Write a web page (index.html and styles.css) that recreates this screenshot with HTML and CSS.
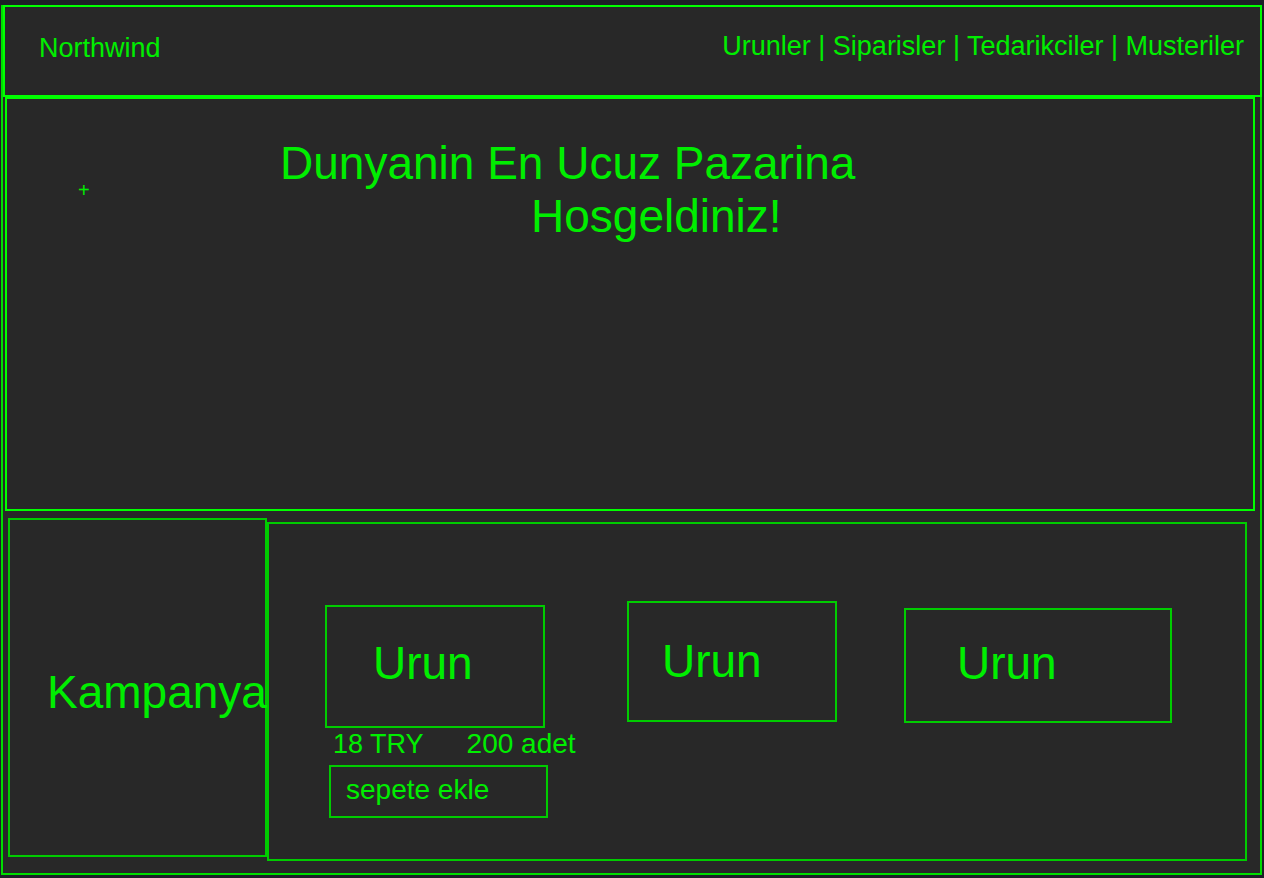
FILE: index.html
```html
<!DOCTYPE html>
<html lang="tr">
<head>
<meta charset="utf-8">
<title>Northwind</title>
<link rel="stylesheet" href="styles.css">
</head>
<body>
<div class="page">
  <header class="header">
    <div class="brand">Northwind</div>
    <nav class="nav">Urunler | Siparisler | Tedarikciler | Musteriler</nav>
  </header>
  <section class="hero">
    <span class="plus">+</span>
    <h1 class="title">
      <span class="line">Dunyanin En Ucuz Pazarina</span>
      <span class="line line-2">Hosgeldiniz!</span>
    </h1>
  </section>
  <section class="bottom">
    <aside class="campaign">Kampanya</aside>
    <div class="products">
      <div class="product product-1">
        <div class="card card-1">Urun</div>
        <div class="meta">
          <span class="price">18 TRY</span>
          <span class="stock">200 adet</span>
        </div>
        <button class="add">sepete ekle</button>
      </div>
      <div class="product product-2">
        <div class="card card-2">Urun</div>
      </div>
      <div class="product product-3">
        <div class="card card-3">Urun</div>
      </div>
    </div>
  </section>
</div>
</body>
</html>
```

FILE: styles.css
```css
* {
  box-sizing: border-box;
}

html, body {
  margin: 0;
  padding: 0;
}

body {
  background: #1d1f27;
  font-family: "Liberation Sans", Arial, sans-serif;
  color: #00ee00;
  width: 1264px;
  height: 878px;
  overflow: hidden;
}

.page {
  margin: 5px 0 0 1px;
  width: 1261px;
  height: 870px;
  border: 2px solid #00dd00;
  background: #282828;
}

.header {
  display: flex;
  justify-content: space-between;
  align-items: flex-start;
  margin: -2px -2px 0 0;
  height: 92px;
  border: 2px solid #00ff00;
  padding: 26px 16px 0 34px;
  font-size: 27px;
}

.brand {
  line-height: 31px;
}

.nav {
  margin-top: -2px;
  line-height: 31px;
  white-space: nowrap;
}

.hero {
  display: flex;
  align-items: flex-start;
  margin-left: 2px;
  width: 1250px;
  height: 414px;
  border: 2px solid #00ff00;
}

.plus {
  display: block;
  width: 12px;
  margin: 80px 0 0 71px;
  font-size: 20px;
  line-height: 23px;
}

.title {
  margin: 38px 0 0 190px;
  font-size: 46px;
  font-weight: normal;
  line-height: 53px;
}

.line {
  display: block;
  white-space: nowrap;
}

.line-2 {
  padding-left: 251px;
}

.bottom {
  display: flex;
  align-items: flex-start;
  margin-top: 7px;
  padding-left: 5px;
}

.campaign {
  width: 259px;
  height: 339px;
  border: 2px solid #00cc00;
  padding: 146px 0 0 37px;
  font-size: 46px;
  line-height: 53px;
  white-space: nowrap;
}

.products {
  display: flex;
  align-items: flex-start;
  margin-top: 4px;
  width: 980px;
  height: 339px;
  border: 2px solid #00cc00;
  padding-left: 56px;
}

.product {
  flex: none;
}

.card {
  border: 2px solid #00cc00;
  font-size: 46px;
  line-height: 53px;
}

.product-1 {
  width: 220px;
  margin-top: 81px;
}

.card-1 {
  width: 220px;
  height: 123px;
  padding: 30px 0 0 46px;
}

.product-2 {
  margin: 77px 0 0 82px;
}

.card-2 {
  width: 210px;
  height: 121px;
  padding: 32px 0 0 33px;
}

.product-3 {
  margin: 84px 0 0 67px;
}

.card-3 {
  width: 268px;
  height: 115px;
  padding: 27px 0 0 51px;
}

.meta {
  display: flex;
  align-items: baseline;
  padding-left: 8px;
  height: 31px;
  line-height: 31px;
  white-space: nowrap;
}

.price {
  font-size: 27px;
}

.stock {
  margin-left: 43px;
  font-size: 28px;
}

.add {
  display: flex;
  align-items: flex-start;
  margin: 6px 0 0 4px;
  width: 219px;
  height: 53px;
  border: 2px solid #00cc00;
  background: transparent;
  color: #00ee00;
  font-family: "Liberation Sans", Arial, sans-serif;
  font-size: 28px;
  line-height: 32px;
  text-align: left;
  padding: 7px 0 0 15px;
  white-space: nowrap;
}
```
